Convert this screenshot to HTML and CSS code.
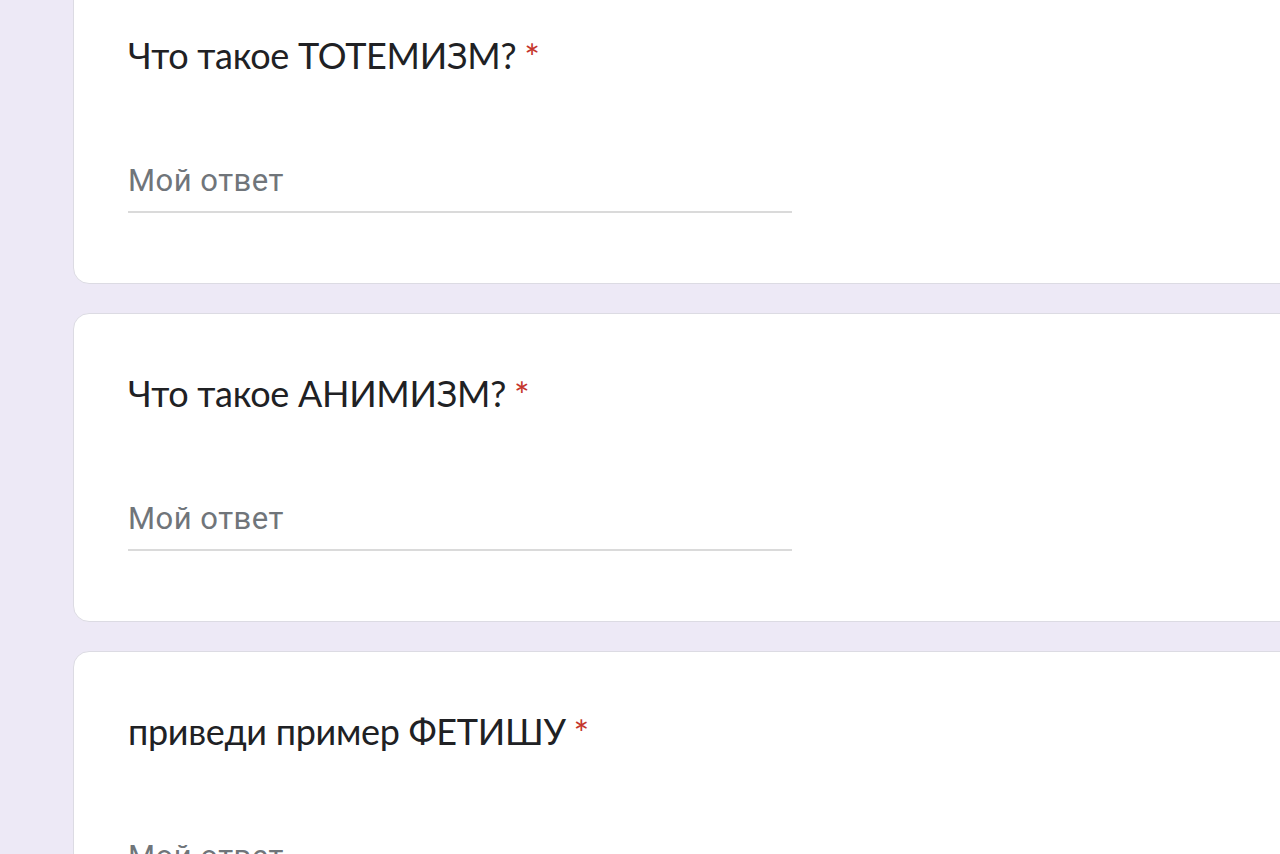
FILE: index.html
```html
<!DOCTYPE html>
<html lang="ru">
<head>
<meta charset="utf-8">
<title>Форма</title>
<link rel="stylesheet" href="styles.css">
</head>
<body>
<main class="form">
  <section class="card">
    <div class="question">Что такое ТОТЕМИЗМ? <span class="req">*</span></div>
    <div class="answer"><span class="placeholder">Мой ответ</span></div>
  </section>
  <section class="card">
    <div class="question">Что такое АНИМИЗМ? <span class="req">*</span></div>
    <div class="answer"><span class="placeholder">Мой ответ</span></div>
  </section>
  <section class="card">
    <div class="question">приведи пример ФЕТИШУ <span class="req">*</span></div>
    <div class="answer"><span class="placeholder">Мой ответ</span></div>
  </section>
</main>
</body>
</html>
```
FILE: styles.css
```css
html, body {
  margin: 0;
  padding: 0;
  height: 854px;
  overflow: hidden;
  background: #ede9f6;
}

.form {
  display: flex;
  flex-direction: column;
  gap: 29px;
  margin-top: -25px;
  padding-left: 73px;
}

.card {
  box-sizing: border-box;
  width: 1300px;
  height: 309px;
  background: #ffffff;
  border: 1px solid #dcdbe3;
  border-radius: 16px;
  padding: 55px 0 0 54px;
}

.question {
  font-family: Lato, Roboto, "Noto Sans", sans-serif;
  font-size: 36px;
  letter-spacing: -0.3px;
  line-height: 48px;
  color: #202124;
}

.req {
  color: #c5362c;
  font-size: 37px;
  vertical-align: -2px;
  margin-left: -1px;
}

.answer {
  margin-top: 82px;
  width: 664px;
  height: 48px;
  border-bottom: 2px solid #dadada;
}

.placeholder {
  display: block;
  font-family: Roboto, "Noto Sans", sans-serif;
  font-size: 31px;
  letter-spacing: 0.5px;
  line-height: 36px;
  color: #70757a;
}
```
